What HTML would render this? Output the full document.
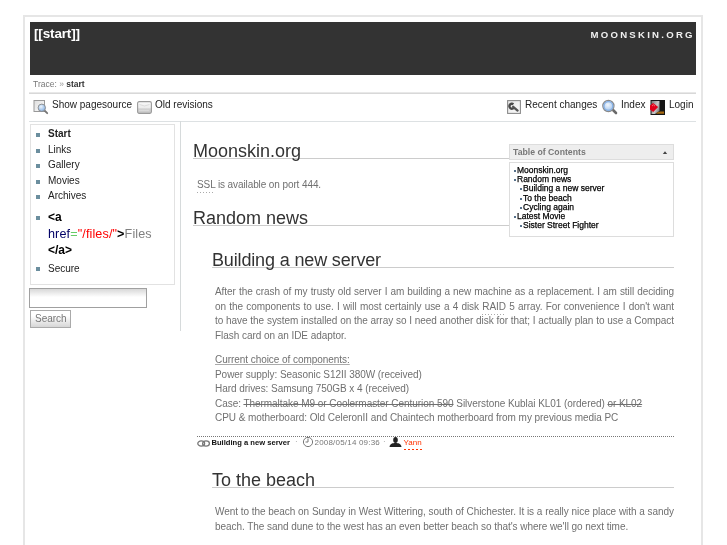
<!DOCTYPE html>
<html><head><meta charset="utf-8">
<style>
*{margin:0;padding:0;box-sizing:border-box}
html,body{width:727px;height:545px;overflow:hidden;background:#fff}
body{font-family:"Liberation Sans",sans-serif;position:relative;color:#333}
.wrap{position:absolute;left:0;top:0;width:727px;height:545px;will-change:transform}
.a{position:absolute;white-space:nowrap}
#frame{left:23px;top:15px;width:680px;height:600px;border:2px solid #e6e6e6}
#hdr{left:30px;top:22px;width:666px;height:53px;background:#333}
#title{left:34px;top:25.5px;font-size:13.5px;letter-spacing:-0.15px;font-weight:bold;color:#fff;line-height:16px}
#logo{left:590.5px;top:29px;font-size:9.6px;font-weight:bold;color:#f0f0f0;letter-spacing:2.25px;line-height:12px}
#trace{left:33px;top:79px;font-size:8.5px;line-height:10px;color:#777}
#trace b{color:#333}
.hline{position:absolute;height:1px;background:#dde1e3}
.tb{font-size:10px;line-height:12px;color:#222;top:99px}
.side{left:30px;top:124px;width:145px;height:161px;border:1px solid #e2e2e2}
.vline{position:absolute;left:180px;top:121px;width:1px;height:210px;background:#d6dadb}
.li{position:absolute;left:48px;font-size:10px;line-height:12px;color:#222;white-space:nowrap}
.bul{position:absolute;left:36px;width:4px;height:4px;background:#6b8e9e}
.code{position:absolute;left:48px;font-size:12px;line-height:16px;white-space:nowrap}
h1,h2{position:absolute;font-weight:normal;font-size:18px;line-height:14px;color:#333;white-space:nowrap;border-bottom:1px solid #ccc}
.j{text-align:justify;text-align-last:justify;white-space:nowrap}
.acr{padding-bottom:3px;background:repeating-linear-gradient(90deg,#aaa 0 1px,transparent 1px 3px) 0 100%/100% 1px no-repeat}
.toc{position:absolute;font-size:8.5px;line-height:10px;color:#000;white-space:nowrap;-webkit-text-stroke:0.25px #000}
.tb2{position:absolute;width:2px;height:2px;background:#56708a;margin-top:-0.5px}
.p{position:absolute;left:215px;width:459px;font-size:10px;letter-spacing:-0.05px;line-height:14.5px;color:#707070;text-align:justify}
</style></head><body><div class="wrap">
<div id="frame" class="a"></div>
<div id="hdr" class="a"></div>
<div id="title" class="a">[[start]]</div>
<div id="logo" class="a">MOONSKIN.ORG</div>
<div id="trace" class="a">Trace: <span style="color:#999">»</span> <b>start</b></div>
<div class="hline" style="left:29px;top:92px;width:667px;height:2px;background:linear-gradient(#e8e8e8 50%,#d8d8d8 50%)"></div>

<!-- toolbar -->
<svg class="a" style="left:33px;top:99px" width="16" height="16" viewBox="0 0 16 16">
  <defs><linearGradient id="g1" x1="0" y1="0" x2="1" y2="1"><stop offset="0" stop-color="#ddd"/><stop offset="1" stop-color="#fff"/></linearGradient>
  <radialGradient id="g2" cx="0.4" cy="0.35" r="0.7"><stop offset="0" stop-color="#eef5fc"/><stop offset="0.6" stop-color="#a8c8ec"/><stop offset="1" stop-color="#7fa6d6"/></radialGradient></defs>
  <rect x="1" y="1.5" width="10.5" height="11" fill="url(#g1)" stroke="#999" stroke-width="1"/>
  <line x1="11.5" y1="11.5" x2="14.2" y2="14.2" stroke="#777" stroke-width="1.8" stroke-linecap="round"/>
  <circle cx="8.8" cy="8.8" r="3.7" fill="url(#g2)" stroke="#8a8a8a" stroke-width="0.9"/>
</svg>
<div class="a tb" style="left:52px">Show pagesource</div>
<svg class="a" style="left:137px;top:101px" width="15" height="13" viewBox="0 0 15 13">
  <defs><linearGradient id="g3" x1="0" y1="0" x2="0" y2="1"><stop offset="0" stop-color="#fafafa"/><stop offset="0.5" stop-color="#ececec"/><stop offset="0.62" stop-color="#d2d2d2"/><stop offset="1" stop-color="#c8c8c8"/></linearGradient></defs>
  <rect x="0.6" y="0.6" width="13.8" height="11.8" rx="1.6" fill="url(#g3)" stroke="#9a9a9a" stroke-width="1.1"/>
  <path d="M2.5 3.5 Q7.5 6.5 12.5 3.5" fill="none" stroke="#d8d8d8" stroke-width="0.9"/>
  <path d="M2.5 9.6 H12.5" stroke="#f0f0f0" stroke-width="0.8" stroke-dasharray="1 1"/>
</svg>
<div class="a tb" style="left:155px">Old revisions</div>

<svg class="a" style="left:507px;top:100px" width="14" height="14" viewBox="0 0 14 14">
  <defs><linearGradient id="g4" x1="0" y1="0" x2="1" y2="1"><stop offset="0" stop-color="#e8e8e8"/><stop offset="1" stop-color="#fafafa"/></linearGradient></defs>
  <rect x="0.6" y="0.6" width="12.8" height="12.8" fill="url(#g4)" stroke="#8c8c8c" stroke-width="1.1"/>
  <path d="M6.4 4.2 A2.5 2.5 0 1 0 7 7.6" fill="none" stroke="#4a4a4a" stroke-width="2.4"/>
  <path d="M6.2 6.8 L10.6 10.6" fill="none" stroke="#555" stroke-width="2.3" stroke-linecap="round"/>
</svg>
<div class="a tb" style="left:525px">Recent changes</div>
<svg class="a" style="left:601px;top:99px" width="17" height="16" viewBox="0 0 17 16">
  <defs><radialGradient id="g5" cx="0.45" cy="0.4" r="0.7"><stop offset="0" stop-color="#f2f7fd"/><stop offset="0.55" stop-color="#bcd5f2"/><stop offset="1" stop-color="#7ea7d8"/></radialGradient></defs>
  <line x1="11.5" y1="10.5" x2="15" y2="14" stroke="#6a6a6a" stroke-width="2.6" stroke-linecap="round"/>
  <circle cx="7.4" cy="7" r="5.6" fill="url(#g5)" stroke="#8a8a8a" stroke-width="1.2"/>
  <circle cx="7.4" cy="7" r="4.4" fill="none" stroke="#86b0e4" stroke-width="1.2"/>
</svg>
<div class="a tb" style="left:621px">Index</div>
<svg class="a" style="left:650px;top:100px" width="15" height="15" viewBox="0 0 15 15">
  <defs><linearGradient id="g6" x1="0" y1="0" x2="1" y2="0.6"><stop offset="0" stop-color="#777"/><stop offset="0.65" stop-color="#c8c8c8"/><stop offset="1" stop-color="#888"/></linearGradient></defs>
  <rect x="0.5" y="0" width="14.5" height="15" fill="#161616"/>
  <path d="M1.5 1 H9.5 V11 L5 14 H1.5 Z" fill="url(#g6)"/>
  <path d="M7 12.5 L10 11.5 H14 V13.8 H6 Z" fill="#a86a10"/>
  <path d="M0 5.5 L3 3 L8.2 7 L3.2 12 L0 9.5 Z" fill="#e0001a"/>
  <path d="M2 6 L3.5 4.8 L5 6.2" stroke="#ff8080" stroke-width="0.8" fill="none"/>
</svg>
<div class="a tb" style="left:669px">Login</div>
<div class="hline" style="left:29px;top:121px;width:667px"></div>

<!-- sidebar -->
<div class="a side"></div>
<div class="vline"></div>
<div class="bul" style="top:133px"></div><div class="li" style="top:128px;font-weight:bold">Start</div>
<div class="bul" style="top:149px"></div><div class="li" style="top:144px">Links</div>
<div class="bul" style="top:164px"></div><div class="li" style="top:159px">Gallery</div>
<div class="bul" style="top:180px"></div><div class="li" style="top:175px">Movies</div>
<div class="bul" style="top:195px"></div><div class="li" style="top:190px">Archives</div>
<div class="bul" style="top:216px"></div>
<div class="code" style="top:209px;font-weight:bold;color:#000">&lt;a</div>
<div class="code" style="top:226px;font-size:12.6px;letter-spacing:0.12px"><span style="color:#000066">href</span><span style="color:#66cc66">=</span><span style="color:#ff0000">"/files/"</span><b style="color:#000">&gt;</b><span style="color:#808080">Files</span></div>
<div class="code" style="top:242px;font-weight:bold;color:#000">&lt;/a&gt;</div>
<div class="bul" style="top:267px"></div><div class="li" style="top:263px">Secure</div>

<div class="a" style="left:29px;top:288px;width:118px;height:20px;border:1px solid #a0a0a0;background:linear-gradient(#d8d8d8,#fff 45%)"></div>
<div class="a" style="left:30px;top:310px;width:41px;height:18px;border:1px solid #aaa;background:linear-gradient(#fff 30%,#d6d6d6);font-size:10px;line-height:16px;color:#777;padding-left:4px">Search</div>

<!-- content -->
<h1 style="left:193px;top:144px;width:316px">Moonskin.org</h1>
<div class="a" style="left:197px;top:179px;font-size:10px;line-height:12px;color:#707070;letter-spacing:-0.1px"><span class="acr">SSL</span> is available on port 444.</div>
<h1 style="left:193px;top:211px;width:316px">Random news</h1>

<!-- toc -->
<div class="a" style="left:509px;top:144px;width:165px;height:16px;background:#eee;border:1px solid #ddd;font-size:8.7px;font-weight:bold;color:#777;line-height:14px;padding-left:3px">Table of Contents</div>
<svg class="a" style="left:662px;top:150px" width="6" height="5" viewBox="0 0 6 5"><path d="M0.8 4 L3 1.3 L5.2 4 Z" fill="#444"/></svg>
<div class="a" style="left:509px;top:162px;width:165px;height:75px;border:1px solid #ddd"></div>
<div class="toc" style="left:517px;top:165px">Moonskin.org</div><div class="tb2" style="left:513.5px;top:170px"></div>
<div class="toc" style="left:517px;top:174px">Random news</div><div class="tb2" style="left:513.5px;top:179px"></div>
<div class="toc" style="left:523px;top:183px">Building a new server</div><div class="tb2" style="left:519.5px;top:188px"></div>
<div class="toc" style="left:523px;top:193px">To the beach</div><div class="tb2" style="left:519.5px;top:198px"></div>
<div class="toc" style="left:523px;top:202px">Cycling again</div><div class="tb2" style="left:519.5px;top:207px"></div>
<div class="toc" style="left:517px;top:211px">Latest Movie</div><div class="tb2" style="left:513.5px;top:216px"></div>
<div class="toc" style="left:523px;top:220px">Sister Street Fighter</div><div class="tb2" style="left:519.5px;top:225px"></div>


<h2 style="left:212px;top:253px;width:462px;letter-spacing:-0.15px">Building a new server</h2>
<div class="p" style="top:285px"><div class="j">After the crash of my trusty old server I am building a new machine as a replacement. I am still deciding</div><div class="j">on the components to use. I will most certainly use a 4 disk <span class="acr">RAID</span> 5 array. For convenience I don't want</div><div class="j">to have the system installed on the array so I need another disk for that; I actually plan to use a Compact</div><div>Flash card on an IDE adaptor.</div></div>
<div class="p" style="top:353px;text-align:left"><span style="text-decoration:underline;text-decoration-color:#aaa">Current choice of components:</span><br>Power supply: Seasonic S12II 380W (received)<br>Hard drives: Samsung 750GB x 4 (received)<br>Case: <s>Thermaltake M9 or Coolermaster Centurion 590</s> Silverstone Kublai KL01 (ordered) <s>or KL02</s><br>CPU &amp; motherboard: Old CeleronII and Chaintech motherboard from my previous media PC</div>

<div class="a" style="left:197px;top:436px;width:477px;border-top:1px dotted #777"></div>
<svg class="a" style="left:197px;top:439.5px" width="14" height="7" viewBox="0 0 14 7">
  <ellipse cx="4.2" cy="3.5" rx="3.4" ry="2.6" fill="none" stroke="#777" stroke-width="1.3"/>
  <ellipse cx="9" cy="3.5" rx="3.4" ry="2.6" fill="none" stroke="#777" stroke-width="1.3"/>
</svg>
<div class="a" style="left:211.5px;top:437.5px;font-size:7.6px;line-height:10px;color:#111;font-weight:bold">Building a new server</div>
<div class="a" style="left:295px;top:437px;font-size:8px;line-height:10px;color:#aaa">·</div>
<svg class="a" style="left:302px;top:436px" width="12" height="12" viewBox="0 0 12 12">
  <circle cx="6" cy="6" r="4.6" fill="none" stroke="#777" stroke-width="1"/>
  <path d="M6 2.5 V6 H3.5" fill="none" stroke="#777" stroke-width="1"/>
</svg>
<div class="a" style="left:314.5px;top:437.5px;font-size:8px;line-height:10px;color:#777;letter-spacing:0.2px">2008/05/14 09:36</div>
<div class="a" style="left:383px;top:437px;font-size:8px;line-height:10px;color:#aaa">·</div>
<svg class="a" style="left:389px;top:437px" width="13" height="10" viewBox="0 0 13 10">
  <ellipse cx="6.5" cy="3" rx="2.3" ry="3" fill="#222"/>
  <path d="M0.5 10 C1 6.5 3.5 6 6.5 6 C9.5 6 12 6.5 12.5 10 Z" fill="#222"/>
</svg>
<div class="a" style="left:403.5px;top:437.5px;font-size:8px;line-height:10px;color:#f30"><span style="padding-bottom:3px;background:repeating-linear-gradient(90deg,#f30 0 2px,transparent 2px 4px) 0 100%/100% 1px no-repeat">Yann</span></div>

<h2 style="left:212px;top:473px;width:462px">To the beach</h2>
<div class="p" style="top:505px"><div class="j">Went to the beach on Sunday in West Wittering, south of Chichester. It is a really nice place with a sandy</div><div>beach. The sand dune to the west has an even better beach so that's where we'll go next time.</div></div>
</div></body></html>
